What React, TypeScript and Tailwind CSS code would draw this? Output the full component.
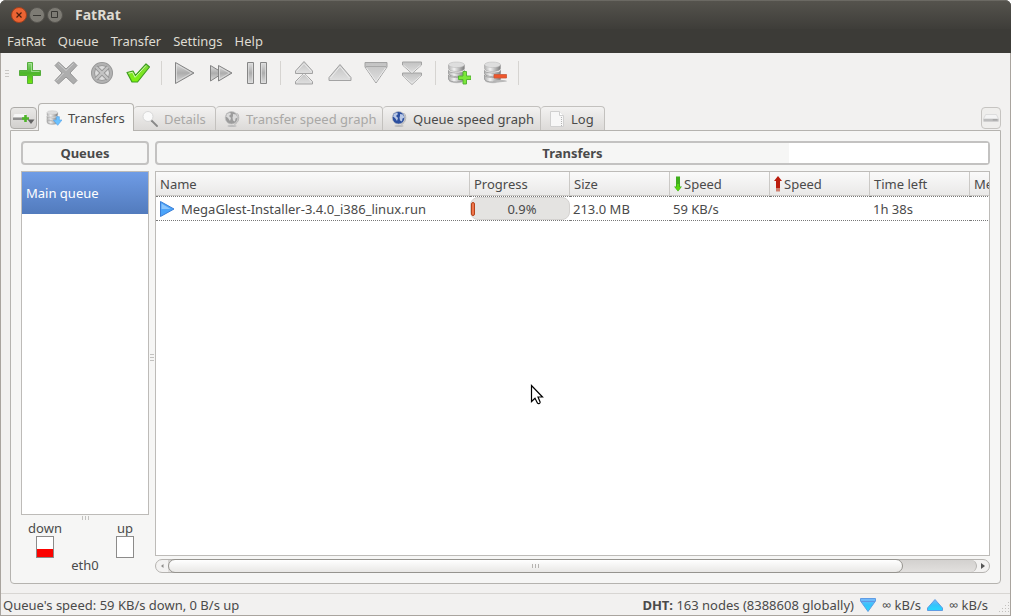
import React from 'react';

interface IconProps {
  className?: string;
}

const PlusIcon: React.FC<IconProps> = ({ className }) => (
  <svg viewBox="0 0 24 24" className={className} aria-hidden="true">
    <defs>
      <linearGradient id="plus" x1="0" y1="0" x2="0" y2="1">
        <stop offset="0" stopColor="#8bd67a" />
        <stop offset="0.5" stopColor="#4cb52c" />
        <stop offset="1" stopColor="#74e80c" />
      </linearGradient>
    </defs>
    <path d="M9.500 1.500h5v8h8v5h-8v8h-5v-8h-8v-5h8z" fill="url(#plus)" stroke="#55ad3c" strokeLinejoin="round" />
    <path d="M10.500 2.500h3v8h8" fill="none" stroke="#b5e8a8" opacity="0.7" />
  </svg>
);

const RemoveIcon: React.FC<IconProps> = ({ className }) => (
  <svg viewBox="0 0 24 24" className={className} aria-hidden="true">
    <path
      d="M4.500 1 L12 8 19.500 1 23 4.500 16 12 23 19.500 19.500 23 12 16 4.500 23 1 19.500 8 12 1 4.500z"
      fill="#adadad"
      stroke="#979797"
      strokeLinejoin="round"
    />
    <path d="M4.500 2.500 12 9.500 19.500 2.500M2.500 19.500 9.500 12" fill="none" stroke="#cfcfcf" />
  </svg>
);

const CancelIcon: React.FC<IconProps> = ({ className }) => (
  <svg viewBox="0 0 24 24" className={className} aria-hidden="true">
    <circle cx="12" cy="12" r="9" fill="#dcdcdc" stroke="#959595" strokeWidth="4" />
    <circle cx="12" cy="12" r="9" fill="none" stroke="#b2b2b2" strokeWidth="2.400" />
    <path d="M6 6l12 12M18 6L6 18" stroke="#959595" strokeWidth="4" />
    <path d="M6 6l12 12M18 6L6 18" stroke="#c4c4c4" strokeWidth="2.400" />
  </svg>
);

const CheckIcon: React.FC<IconProps> = ({ className }) => (
  <svg viewBox="0 0 24 24" className={className} aria-hidden="true">
    <defs>
      <linearGradient id="check" x1="0" y1="0" x2="0" y2="1">
        <stop offset="0" stopColor="#7fd63c" />
        <stop offset="1" stopColor="#7cf40c" />
      </linearGradient>
    </defs>
    <path
      d="M1 11.500l6-1.500 2.500 4.500L20 3l3.500 3L11.500 21H6z"
      fill="url(#check)"
      stroke="#3f9d20"
      strokeWidth="1.200"
      strokeLinejoin="round"
    />
    <path d="M2.500 12.300l4-1 2.600 5L20 4.500" fill="none" stroke="#d0f7b0" />
  </svg>
);

const SharedGradients = () => (
  <svg className="absolute h-0 w-0" aria-hidden="true">
    <defs>
      <linearGradient id="grey" x1="0" y1="0" x2="0" y2="1">
        <stop offset="0" stopColor="#dedede" />
        <stop offset="0.5" stopColor="#adadad" />
        <stop offset="1" stopColor="#dcdcdc" />
      </linearGradient>
      <linearGradient id="light" x1="0" y1="0" x2="0" y2="1">
        <stop offset="0" stopColor="#c2c2c2" />
        <stop offset="1" stopColor="#e0e0e0" />
      </linearGradient>
      <linearGradient id="disk" x1="0" y1="0" x2="1" y2="0">
        <stop offset="0" stopColor="#b0b0b0" />
        <stop offset="0.35" stopColor="#f2f2f2" />
        <stop offset="1" stopColor="#7c7c7c" />
      </linearGradient>
      <linearGradient id="aqua" x1="0" y1="0" x2="0" y2="1">
        <stop offset="0" stopColor="#7cb8fb" />
        <stop offset="0.5" stopColor="#35c3fb" />
        <stop offset="1" stopColor="#25d8ff" />
      </linearGradient>
    </defs>
  </svg>
);

const PlayIcon: React.FC<IconProps> = ({ className }) => (
  <svg viewBox="0 0 24 24" className={className} aria-hidden="true">
    <path d="M2.500 1.500v21L21 12z" fill="url(#grey)" stroke="#848484" strokeLinejoin="round" />
    <path d="M3.500 3.500v17L18.500 12z" fill="none" stroke="#e4e4e4" opacity="0.7" />
  </svg>
);

const ForwardIcon: React.FC<IconProps> = ({ className }) => (
  <svg viewBox="0 0 24 24" className={className} aria-hidden="true">
    <path d="M1.500 4.500v15.500L14 12z" fill="url(#grey)" stroke="#848484" strokeLinejoin="round" />
    <path d="M9.500 4.500v15.500L23 12z" fill="url(#grey)" stroke="#848484" strokeLinejoin="round" />
    <path d="M10.500 6.500v11.500L20.500 12z" fill="none" stroke="#e4e4e4" opacity="0.7" />
  </svg>
);

const PauseIcon: React.FC<IconProps> = ({ className }) => (
  <svg viewBox="0 0 24 24" className={className} aria-hidden="true">
    <path d="M2.500 1.500h6v21h-6zM15.500 1.500h6v21h-6z" fill="url(#grey)" stroke="#868686" />
    <path d="M3.500 2.500h4v19h-4zM16.500 2.500h4v19h-4z" fill="none" stroke="#e0e0e0" opacity="0.7" />
  </svg>
);

const TopIcon: React.FC<IconProps> = ({ className }) => (
  <svg viewBox="0 0 24 24" className={className} aria-hidden="true">
    <path d="M12 12l8.500 8.500v2.500h-17v-2.500z" fill="url(#light)" stroke="#a3a3a3" strokeLinejoin="round" />
    <path d="M12 .5l8.500 9.500v2.500h-17V10z" fill="url(#light)" stroke="#a3a3a3" strokeLinejoin="round" />
    <path d="M4.500 10.500l7.500-8 7.500 8M4.500 21l6.500-7.500h2l6.500 7.500" fill="none" stroke="#ececec" />
  </svg>
);

const UpIcon: React.FC<IconProps> = ({ className }) => (
  <svg viewBox="0 0 24 24" className={className} aria-hidden="true">
    <path d="M12 3.500l11 13v3H1v-3z" fill="url(#light)" stroke="#a3a3a3" strokeLinejoin="round" />
    <path d="M2.500 17L12 5.500 21.500 17" fill="none" stroke="#ececec" />
  </svg>
);

const DownIcon: React.FC<IconProps> = ({ className }) => (
  <svg viewBox="0 0 24 24" className={className} aria-hidden="true">
    <path d="M1 1.500h22v4.500L12 22 1 6z" fill="url(#light)" stroke="#a3a3a3" strokeLinejoin="round" />
    <path d="M2 5.500h20" stroke="#a8a8a8" />
    <path d="M2.500 7L12 20.500 21.500 7" fill="none" stroke="#ececec" />
  </svg>
);

const BottomIcon: React.FC<IconProps> = ({ className }) => (
  <svg viewBox="0 0 24 24" className={className} aria-hidden="true">
    <path d="M2.500 12H21.500v2.500L12 23.500l-9.500-9z" fill="url(#light)" stroke="#a3a3a3" strokeLinejoin="round" />
    <path d="M2.500 1H21.500v3L12 12.500 2.500 4z" fill="url(#light)" stroke="#a3a3a3" strokeLinejoin="round" />
    <path d="M3.500 4.200L12 11.500l8.500-7.300M3.500 15L12 22.300l8.500-7.300" fill="none" stroke="#ececec" />
  </svg>
);

const Disks = () => (
  <g fill="url(#disk)">
    <ellipse cx="10" cy="20" rx="8" ry="2.200" fill="#c9c9c9" />
    <path d="M1.500 14c0 1.500 4 2.500 8.500 2.500s7.500-1 7.500-2.500v4c0 4-16 4-16 0z" stroke="#8e8e8e" strokeWidth="0.700" />
    <path d="M1.500 9.500c0 1.500 4 2.500 8.500 2.500s7.500-1 7.500-2.500v3c0 4-16 4-16 0z" stroke="#8e8e8e" strokeWidth="0.700" />
    <path d="M1.500 4v3.500c0 4 16 4 16 0V4z" stroke="#9c9c9c" strokeWidth="0.500" />
    <ellipse cx="9.500" cy="3.800" rx="8" ry="2.800" fill="#dedede" stroke="#b5b5b5" strokeWidth="0.500" />
  </g>
);

const QueueAddIcon: React.FC<IconProps> = ({ className }) => (
  <svg viewBox="0 0 24 24" className={className} aria-hidden="true">
    <Disks />
    <path d="M16 10.500h3.500v4.500H24v3.500h-4.500V23H16v-4.500h-4.500V15H16z" fill="#7be83a" stroke="#4fae2f" strokeWidth="0.900" />
  </svg>
);

const QueueRemoveIcon: React.FC<IconProps> = ({ className }) => (
  <svg viewBox="0 0 24 24" className={className} aria-hidden="true">
    <Disks />
    <ellipse cx="17" cy="20" rx="7" ry="1.200" fill="#b9b9b9" />
    <path d="M11 13.500h12.500v3.500H11z" fill="#f0562b" stroke="#c8593b" strokeWidth="0.800" />
  </svg>
);

const QueueTabIcon: React.FC<IconProps> = ({ className }) => (
  <svg viewBox="0 0 24 24" className={className} aria-hidden="true">
    <Disks />
    <path d="M15.500 10h4.500v5H24l-6.500 8L11 15h4.500z" fill="#6cc3ff" stroke="#5aa5ea" />
  </svg>
);

const SearchIcon: React.FC<IconProps> = ({ className }) => (
  <svg viewBox="0 0 16 16" className={className} aria-hidden="true">
    <path d="M9.500 9.500l5.500 5.500" stroke="#888" strokeWidth="1.800" strokeLinecap="round" />
    <circle cx="6" cy="5.500" r="5" fill="#fafafa" stroke="#d8d8d8" />
  </svg>
);

const GlobeIcon: React.FC<IconProps & { color: string; land: string }> = ({ className, color, land }) => (
  <svg viewBox="0 0 16 16" className={className} aria-hidden="true">
    <ellipse cx="8" cy="15" rx="4.500" ry="1" fill="#bdbdbd" />
    <path d="M13.500 2.500c2.500 4 1 9-3 11" fill="none" stroke="#b0b0b0" />
    <circle cx="7.500" cy="6.800" r="6.300" fill={color} stroke="#c4c4c4" strokeWidth="0.700" />
    <path d="M3 3l3-1.500 1 1.500-2 2 2 2-1 3-2-3L2 5.500zM9 3l3 .5 1.500 3-2 1-.5 3-2-1-.5-3L9 5z" fill={land} />
  </svg>
);

const PageIcon: React.FC<IconProps> = ({ className }) => (
  <svg viewBox="0 0 16 16" className={className} aria-hidden="true">
    <path d="M1.500.5h9l4 4v11h-13z" fill="#f7f7f7" stroke="#d0d0d0" />
    <path d="M10.500.5v4h4" fill="#fff" stroke="#d0d0d0" />
    <path d="M12.500 6v9" stroke="#b5b5b5" strokeDasharray="1 1" />
  </svg>
);

const TransferPlayIcon: React.FC<IconProps> = ({ className }) => (
  <svg viewBox="0 0 16 16" className={className} aria-hidden="true">
    <path d="M1.500.5v15l13.500-7.500z" fill="#4ba4fa" stroke="#3b7ed6" strokeLinejoin="round" />
    <path d="M2.500 2.500v5.500h9z" fill="#8cc6fd" />
  </svg>
);

const ArrowDownIcon: React.FC<IconProps> = ({ className }) => (
  <svg viewBox="0 0 8 16" className={className} aria-hidden="true">
    <path d="M2 .5h4v10h2l-4 5-4-5h2z" fill="#3fae1c" />
    <path d="M3 8h2v3h2l-3 4-3-4h2z" fill="#59d60f" />
  </svg>
);

const ArrowUpIcon: React.FC<IconProps> = ({ className }) => (
  <svg viewBox="0 0 8 16" className={className} aria-hidden="true">
    <path d="M2 12h4v3.500H2z" fill="#cf7c6c" />
    <path d="M4 0l4 5H6v7H2V5H0z" fill="#bb1b0c" />
  </svg>
);

const LimitIcon: React.FC<IconProps & { up?: boolean }> = ({ className, up }) => (
  <svg viewBox="0 0 16 14" className={className} aria-hidden="true">
    {up ? (
      <path d="M8 1.500l7.500 8.500v2.500H.5V10z" fill="url(#aqua)" stroke="#5f9ce4" strokeLinejoin="round" />
    ) : (
      <>
        <path d="M.5.5h15V3L8 13.500.5 3z" fill="url(#aqua)" stroke="#5f9ce4" strokeLinejoin="round" />
        <path d="M1 3.500h14" stroke="#5e95e4" />
      </>
    )}
  </svg>
);

const DriveIcon: React.FC<IconProps> = ({ className }) => (
  <svg viewBox="0 0 18 10" className={className} aria-hidden="true">
    <path d="M3 .5h12l2.500 5H.5z" fill="#f4f4f4" stroke="#dadada" />
    <path d="M.5 5.500h17v3H.5z" fill="#bdbdbd" />
    <path d="M11 6.500h5" stroke="#979797" />
  </svg>
);

const CornerAddIcon: React.FC<IconProps> = ({ className }) => (
  <svg viewBox="0 0 22 16" className={className} aria-hidden="true">
    <path d="M1.500 4h11l2 3.500H0z" fill="#f6f6f6" />
    <path d="M0 7.500h14v2.500H0z" fill="#8f8f8f" />
    <path d="M11.200 5h2.600v2.200H16v2.600h-2.200V12h-2.600V9.800H9V7.200h2.200z" fill="#4fb52a" />
    <path d="M14.500 9.500h7L18 14z" fill="#646464" />
  </svg>
);

const CursorIcon: React.FC<IconProps> = ({ className }) => (
  <svg viewBox="0 0 14 21" className={className} aria-hidden="true">
    <path
      d="M1.500 1.500v16l3.500-3.300 2.500 5c1 1 3 .2 2.600-1.200L8 13H12.500z"
      fill="#fff"
      stroke="#000"
      strokeWidth="1.200"
    />
  </svg>
);

const menus = ['FatRat', 'Queue', 'Transfer', 'Settings', 'Help'];

const toolGroups = [
  [
    { label: 'Add transfer', icon: PlusIcon },
    { label: 'Remove transfer', icon: RemoveIcon },
    { label: 'Remove with data', icon: CancelIcon },
    { label: 'Remove completed', icon: CheckIcon },
  ],
  [
    { label: 'Resume', icon: PlayIcon },
    { label: 'Force resume', icon: ForwardIcon },
    { label: 'Pause', icon: PauseIcon },
  ],
  [
    { label: 'Move to top', icon: TopIcon },
    { label: 'Move up', icon: UpIcon },
    { label: 'Move down', icon: DownIcon },
    { label: 'Move to bottom', icon: BottomIcon },
  ],
  [
    { label: 'Add queue', icon: QueueAddIcon },
    { label: 'Remove queue', icon: QueueRemoveIcon },
  ],
];

const windowButton = 'flex h-4 w-4 items-center justify-center rounded-full border';

const TitleBar = () => (
  <header className="rounded-t-md bg-[#3c3b37] text-[#dfdbd2]">
    <div className="flex h-[29px] items-center rounded-t-md border-t border-[#6b6963] bg-linear-to-b from-[#55534d] to-[#3e3d39] px-[11px]">
      <div className="flex gap-0.5">
        <button aria-label="Close" className={`${windowButton} border-[#a0401d] bg-[#ec6433]`}>
          <svg viewBox="0 0 6 6" className="h-1.5 w-1.5">
            <path d="M.5.5l5 5M5.500.5l-5 5" stroke="#4c1f0e" strokeWidth="1.200" />
          </svg>
        </button>
        <button aria-label="Minimize" className={`${windowButton} border-[#55534e] bg-[#7d7b74]`}>
          <svg viewBox="0 0 8 8" className="h-2 w-2">
            <path d="M0 4.500h8" stroke="#383733" />
          </svg>
        </button>
        <button aria-label="Maximize" className={`${windowButton} border-[#55534e] bg-[#7d7b74]`}>
          <svg viewBox="0 0 8 8" className="h-2 w-2">
            <path d="M.5.5h6v6h-6z" fill="none" stroke="#383733" />
          </svg>
        </button>
      </div>
      <h1 className="ml-3 text-sm font-bold">FatRat</h1>
    </div>
    <nav className="flex h-6 items-center gap-3 px-[7px]">
      {menus.map((menu) => (
        <button key={menu}>{menu}</button>
      ))}
    </nav>
  </header>
);

const Toolbar = () => (
  <div className="flex h-10 items-center pr-2">
    <div className="flex w-[11px] flex-col items-center gap-0.5">
      <span className="h-px w-1 bg-[#c9c7c4]" />
      <span className="h-px w-1 bg-[#c9c7c4]" />
      <span className="h-px w-1 bg-[#c9c7c4]" />
    </div>
    {toolGroups.map((group) => (
      <div key={group[0].label} className="flex items-center">
        {group.map(({ label, icon: Icon }) => (
          <button key={label} aria-label={label} className="flex w-9 justify-center">
            <Icon className="h-6 w-6" />
          </button>
        ))}
        <span className="mx-[5px] h-6 w-px bg-[#d6d4d1]" />
      </div>
    ))}
  </div>
);

const tabClass =
  'flex h-6 items-center gap-1.5 rounded-t border border-b-0 border-l-0 border-[#c3c1be] bg-linear-to-b from-[#f3f2f1] to-[#dcdad8] pl-2';

const Tabs = () => (
  <div className="mt-[10px] flex items-end justify-between px-[9px]">
    <div className="flex items-end">
      <button
        aria-label="New tab"
        className="mr-px mb-px flex h-[22px] w-[27px] items-center justify-center rounded border border-[#adaba8] bg-linear-to-b from-[#e9e8e6] to-[#d2d0ce]"
      >
        <CornerAddIcon className="h-4 w-[22px]" />
      </button>
      <div role="tablist" className="flex items-end">
        <button
          role="tab"
          aria-selected="true"
          className="z-10 -mb-px flex h-[28px] w-[96px] items-center gap-1.5 rounded-t border border-b-0 border-[#b5b3af] bg-[#f6f6f5] pl-[7px]"
        >
          <QueueTabIcon className="h-4 w-4" />
          Transfers
        </button>
        <button role="tab" disabled className={`${tabClass} w-[82px] text-[#a9a8a6]`}>
          <SearchIcon className="h-4 w-4" />
          Details
        </button>
        <button role="tab" disabled className={`${tabClass} w-[167px] text-[#a9a8a6]`}>
          <GlobeIcon className="h-4 w-4" color="#9c9c9c" land="#dadada" />
          Transfer speed graph
        </button>
        <button role="tab" className={`${tabClass} w-[158px]`}>
          <GlobeIcon className="h-4 w-4" color="#2c4f9f" land="#b9c8e6" />
          Queue speed graph
        </button>
        <button role="tab" className={`${tabClass} w-[64px]`}>
          <PageIcon className="h-4 w-4" />
          Log
        </button>
      </div>
    </div>
    <button
      aria-label="Close tab"
      className="mb-px flex h-[22px] w-5 items-center justify-center rounded border border-[#c6c4c1] bg-[#efeeec]"
    >
      <DriveIcon className="h-[9px] w-4" />
    </button>
  </div>
);

const QueuePanel = () => (
  <aside className="flex w-32 shrink-0 flex-col">
    <h2 className="h-6 rounded-sm border-2 border-[#c3c2c1] text-center leading-5 font-bold">Queues</h2>
    <ul className="mt-1.5 flex-1 border border-[#bdbbb8] bg-white">
      <li>
        <button className="h-[42px] w-full bg-linear-to-b from-[#6f9ce6] to-[#527bbd] px-1 text-left text-white">
          Main queue
        </button>
      </li>
    </ul>
    <div className="flex h-1.5 items-center justify-center gap-0.5">
      <span className="h-1 w-px bg-[#c3c2c0]" />
      <span className="h-1 w-px bg-[#c3c2c0]" />
      <span className="h-1 w-px bg-[#c3c2c0]" />
    </div>
    <div className="flex justify-between px-2 leading-[15px]">
      <div className="flex w-8 flex-col items-center">
        down
        <div className="flex h-[22px] w-[18px] flex-col justify-end border border-[#8c8b8a] bg-white">
          <div className="h-2 bg-[#fb0300]" />
        </div>
      </div>
      <div className="flex w-8 flex-col items-center">
        up
        <div className="h-[22px] w-[18px] border border-[#8c8b8a] bg-white" />
      </div>
    </div>
    <p className="text-center leading-[15px]">eth0</p>
  </aside>
);

const headCell = 'h-6 border-r border-b border-[#cbc9c6] px-1 text-left font-normal';

const TransferTable = () => (
  <div className="mt-1.5 flex-1 overflow-hidden border border-[#bdbbb8] bg-white">
    <table className="w-[914px] table-fixed border-separate border-spacing-0 whitespace-nowrap">
      <thead className="bg-linear-to-b from-[#fafafa] to-[#e9e8e7]">
        <tr>
          <th className={`${headCell} w-[314px]`}>Name</th>
          <th className={headCell}>Progress</th>
          <th className={headCell}>Size</th>
          <th className={headCell}>
            <span className="flex items-center">
              <ArrowDownIcon className="h-4 w-2" />
              <span className="ml-0.5">Speed</span>
            </span>
          </th>
          <th className={headCell}>
            <span className="flex items-center">
              <ArrowUpIcon className="h-4 w-2" />
              <span className="ml-0.5">Speed</span>
            </span>
          </th>
          <th className={headCell}>Time left</th>
          <th className={headCell}>Message</th>
        </tr>
      </thead>
      <tbody>
        <tr className="[&>td]:h-[25px] [&>td]:border-y [&>td]:border-dotted [&>td]:border-[#777]">
          <td className="px-[3px]">
            <span className="flex items-center gap-1.5">
              <TransferPlayIcon className="h-4 w-4" />
              MegaGlest-Installer-3.4.0_i386_linux.run
            </span>
          </td>
          <td>
            <div className="flex h-[23px] items-center rounded-lg border border-[#d4d2d0] bg-[#e4e3e1]">
              <span className="h-3.5 w-1 rounded-xs border border-[#b5431b] bg-[#f0764c]" />
              <span className="flex-1 text-center">0.9%</span>
            </div>
          </td>
          <td className="px-[3px]">213.0 MB</td>
          <td className="px-[3px]">59 KB/s</td>
          <td />
          <td className="px-[3px]">1h 38s</td>
          <td />
        </tr>
      </tbody>
    </table>
  </div>
);

const ScrollBar = () => (
  <div className="mt-[3px] flex h-3.5 rounded-full border border-[#b5b3b0] bg-[#f3f2f1]">
    <button aria-label="Scroll left" className="flex w-3 items-center justify-center">
      <svg viewBox="0 0 4 6" className="h-1.5 w-1">
        <path d="M3.500 1L1 3l2.500 2z" fill="#8d8c8a" />
      </svg>
    </button>
    <div className="flex flex-1 rounded-r-full border-r border-[#b5b3b0] bg-linear-to-b from-[#d3d1cf] to-[#e2e0de]">
      <div className="-my-px flex w-[91%] items-center justify-center gap-0.5 rounded-full border border-[#96948f] bg-linear-to-b from-white to-[#e9e8e6]">
        <span className="h-1 w-px bg-[#b5b3b0]" />
        <span className="h-1 w-px bg-[#b5b3b0]" />
        <span className="h-1 w-px bg-[#b5b3b0]" />
      </div>
    </div>
    <button aria-label="Scroll right" className="flex w-3 items-center justify-center">
      <svg viewBox="0 0 4 6" className="h-1.5 w-1">
        <path d="M0 0l4 3-4 3z" fill="#555" />
      </svg>
    </button>
  </div>
);

const SizeGrip: React.FC<IconProps> = ({ className }) => (
  <svg viewBox="0 0 12 12" className={className} aria-hidden="true">
    <path
      d="M10 1h1v1h-1zM7 4h1v1H7zM10 4h1v1h-1zM4 7h1v1H4zM7 7h1v1H7zM10 7h1v1h-1zM1 10h1v1H1zM4 10h1v1H4zM7 10h1v1H7zM10 10h1v1h-1z"
      fill="#c2c0bd"
    />
  </svg>
);

const StatusBar = () => (
  <footer className="mt-[9px] flex h-[22px] items-center justify-between border-t border-[#d8d6d3] pl-0.5 whitespace-nowrap">
    <span>Queue's speed: 59 KB/s down, 0 B/s up</span>
    <div className="flex items-center gap-1.5">
      <span>
        <b>DHT:</b> 163 nodes (8388608 globally)
      </span>
      <LimitIcon className="h-3.5 w-4" />
      <span>∞ kB/s</span>
      <LimitIcon up className="h-3.5 w-4" />
      <span>∞ kB/s</span>
      <SizeGrip className="ml-1 h-3 w-3 self-end" />
    </div>
  </footer>
);

const App = () => {
  return (
    <div className="bg-white">
      <SharedGradients />
      <div className="relative flex min-h-screen flex-col rounded-t-md bg-[#f2f1f0] font-['Noto_Sans','Open_Sans',sans-serif] text-[13px] leading-4 text-[#4a4a4a]">
        <TitleBar />
        <div className="flex flex-1 flex-col border-x border-b border-[#a9a49e]">
          <Toolbar />
          <Tabs />
          <main className="mx-[9px] flex flex-1 rounded-b border border-[#b5b3af] bg-[#f6f6f5] p-[10px]">
            <QueuePanel />
            <div className="flex w-1.5 shrink-0 flex-col items-center justify-center gap-0.5">
              <span className="h-px w-1 bg-[#c3c2c0]" />
              <span className="h-px w-1 bg-[#c3c2c0]" />
              <span className="h-px w-1 bg-[#c3c2c0]" />
            </div>
            <section className="flex min-w-0 flex-1 flex-col">
              <div className="grid h-6 rounded-sm border-2 border-[#c3c2c1]">
                <div className="col-start-1 row-start-1 w-[24%] justify-self-end bg-white" />
                <h2 className="col-start-1 row-start-1 text-center leading-5 font-bold">Transfers</h2>
              </div>
              <TransferTable />
              <ScrollBar />
            </section>
          </main>
          <StatusBar />
        </div>
        <CursorIcon className="pointer-events-none absolute top-[384px] left-[530px] h-[21px] w-3.5" />
      </div>
    </div>
  );
};

export default App;
